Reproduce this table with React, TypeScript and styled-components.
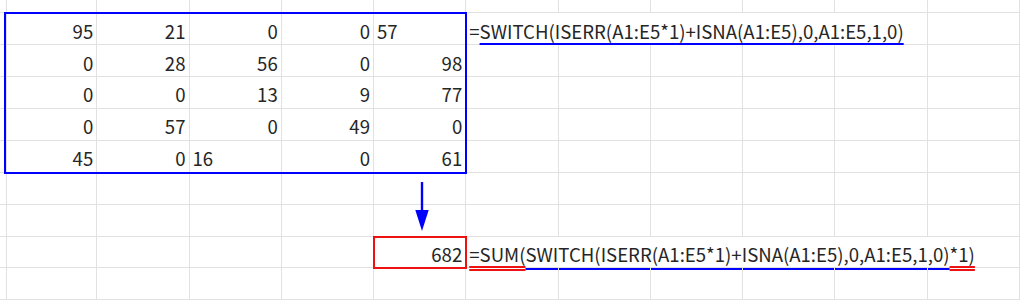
import * as React from "react";
import styled, { createGlobalStyle } from "styled-components";

const COL_W = 92.25;
const ROW_H = 31.9;

const GlobalStyle = createGlobalStyle`
  html, body {
    margin: 0;
    padding: 0;
    background: #ffffff;
    overflow: hidden;
  }
  body {
    width: 1024px;
    height: 301px;
    font-family: "Noto Sans CJK SC", "Noto Sans", sans-serif;
  }
`;

const Sheet = styled.div`
  display: grid;
  grid-template-columns: 5px repeat(11, ${COL_W}px);
  grid-template-rows: 13.3px repeat(9, ${ROW_H}px);
  width: max-content;
`;

const Cell = styled.div<{ $col: number; $row: number; $span?: number; $align?: "left" | "right" }>`
  grid-column: ${(p) => p.$col + 1} / span ${(p) => p.$span ?? 1};
  grid-row: ${(p) => p.$row + 1};
  box-sizing: border-box;
  border-right: 1px solid #e1e1e1;
  border-bottom: 1px solid #e1e1e1;
  display: flex;
  align-items: flex-end;
  justify-content: ${(p) => (p.$align === "right" ? "flex-end" : "flex-start")};
  padding: 0 3px 1.5px 3px;
  font-size: 18.6px;
  line-height: 24px;
  color: #262626;
  white-space: nowrap;
  overflow: visible;
`;

const Frame = styled.div<{ $col: string; $row: string; $color: string }>`
  grid-column: ${(p) => p.$col};
  grid-row: ${(p) => p.$row};
  margin: -1px;
  border: 2px solid ${(p) => p.$color};
  z-index: 2;
  pointer-events: none;
`;

const ArrowSlot = styled.div`
  grid-column: 6;
  grid-row: 7 / 9;
  display: flex;
  align-items: flex-start;
  padding: 9px 0 0 40px;
  z-index: 2;
`;

const Mark = styled.span<{ $color: string; $double?: boolean; $offset: number }>`
  text-decoration: underline ${(p) => (p.$double ? "double" : "solid")} ${(p) => p.$color}
    ${(p) => (p.$double ? "1.5px" : "2px")};
  text-underline-offset: ${(p) => p.$offset}px;
  text-decoration-skip-ink: none;
`;

type Value = { v: string; text?: boolean };

const data: Value[][] = [
  [{ v: "95" }, { v: "21" }, { v: "0" }, { v: "0" }, { v: "57", text: true }],
  [{ v: "0" }, { v: "28" }, { v: "56" }, { v: "0" }, { v: "98" }],
  [{ v: "0" }, { v: "0" }, { v: "13" }, { v: "9" }, { v: "77" }],
  [{ v: "0" }, { v: "57" }, { v: "0" }, { v: "49" }, { v: "0" }],
  [{ v: "45" }, { v: "0" }, { v: "16", text: true }, { v: "0" }, { v: "61" }],
];

const BLUE = "#0000ff";
const RED = "#ee1111";
const INNER = "SWITCH(ISERR(A1:E5*1)+ISNA(A1:E5),0,A1:E5,1,0)";

const DownArrow = () => (
  <svg width="16" height="49" viewBox="0 0 16 49">
    <line x1="8" y1="0" x2="8" y2="30" stroke={BLUE} strokeWidth="2.4" />
    <polygon points="1.3,28 14.7,28 8,49" fill={BLUE} />
  </svg>
);

const FirstFormula = () => (
  <span>
    =<Mark $color={BLUE} $offset={4}>{INNER}</Mark>
  </span>
);

const SumFormula = () => (
  <span>
    <Mark $color={RED} $double $offset={4}>
      =SUM(
    </Mark>
    <Mark $color={BLUE} $offset={6}>{INNER}</Mark>
    <Mark $color={RED} $double $offset={4}>
      *1)
    </Mark>
  </span>
);

export default function App() {
  const cells: React.ReactNode[] = [];
  for (let r = 0; r <= 9; r++) {
    for (let c = 0; c <= 11; c++) {
      const key = `${r}-${c}`;
      // overflowing formula text hides the gridlines it runs across
      if (r === 1 && c >= 7 && c <= 10) continue;
      if (r === 8 && c >= 7 && c <= 11) continue;

      if (r === 1 && c === 6) {
        cells.push(
          <Cell key={key} $col={c} $row={r} $span={5}>
            <FirstFormula />
          </Cell>
        );
        continue;
      }
      if (r === 8 && c === 6) {
        cells.push(
          <Cell key={key} $col={c} $row={r} $span={6}>
            <SumFormula />
          </Cell>
        );
        continue;
      }
      if (r === 8 && c === 5) {
        cells.push(
          <Cell key={key} $col={c} $row={r} $align="right">
            682
          </Cell>
        );
        continue;
      }
      const val = r >= 1 && r <= 5 && c >= 1 && c <= 5 ? data[r - 1][c - 1] : null;
      cells.push(
        <Cell key={key} $col={c} $row={r} $align={val && !val.text ? "right" : "left"}>
          {val?.v}
        </Cell>
      );
    }
  }

  return (
    <>
      <GlobalStyle />
      <Sheet>
        {cells}
        {/* source range A1:E5 */}
        <Frame $col="2 / 7" $row="2 / 7" $color={BLUE} />
        {/* result cell */}
        <Frame $col="6 / 7" $row="9 / 10" $color={RED} />
        <ArrowSlot>
          <DownArrow />
        </ArrowSlot>
      </Sheet>
    </>
  );
}
